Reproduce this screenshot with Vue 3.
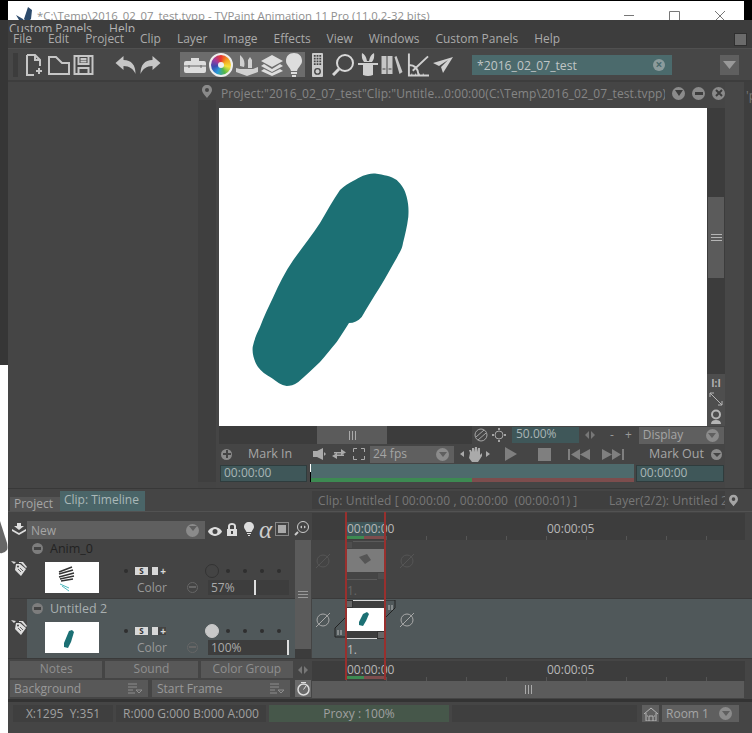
<template>
  <div class="screen">
    <div class="edge">
      <div class="edge-black"></div>
      <div class="edge-dark"></div>
      <div class="edge-white">
        <svg class="swoosh" width="8" height="33" viewBox="0 0 8 33"><path d="M0 0L7 22Q8 27 7 29Q4 33 0 32Z" fill="#666" /></svg>
      </div>
    </div>

    <div class="app">
      <div class="titlebar">
        <div class="title-white">
          <svg class="butterfly" width="18" height="16" viewBox="0 0 18 16"><path d="M0 8L7 12L10 16L6 16L3 13ZM8 12L12 0L16 3L15 12L11 16Z" fill="#2c4a6b" /></svg>
          <span class="title-text">*C:\Temp\2016_02_07_test.tvpp - TVPaint Animation 11 Pro (11.0.2-32 bits)</span>
          <span class="spacer"></span>
          <svg class="wincontrols" width="110" height="20" viewBox="0 0 110 20" fill="none" stroke="#777"><path d="M0 14.5H10M45.5 10.5H55.5V20.5H45.5ZM91 10L101 20M101 10L91 20" /></svg>
        </div>
        <div class="title-black"></div>
      </div>

      <div class="ghostmenu"><span>Custom Panels</span><span>Help</span></div>

      <div class="menubar">
        <span v-for="m in menus" :key="m">{{ m }}</span>
        <span class="spacer"></span>
        <span class="menu-box"></span>
      </div>

      <div class="toolbar">
        <span class="grip"></span>
        <svg class="ic" style="margin-left:8px" width="16" height="22" viewBox="0 0 16 22" fill="none" stroke="#c6c6c6" stroke-width="2"><path d="M1 1H9L14 6V12M1 1V21H8M9 1V6H14M10 17H16M13 14V20" /></svg>
        <svg class="ic" style="margin-left:6px" width="22" height="20" viewBox="0 0 22 20" fill="none" stroke="#c6c6c6" stroke-width="2"><path d="M1 19V2H8L14 8H21V19Z" /></svg>
        <svg class="ic" style="margin-left:3px" width="21" height="20" viewBox="0 0 20 20" fill="none" stroke="#c6c6c6" stroke-width="2"><path d="M1 1H19V19H1ZM5 1V9H15V1M5 19V13H15V19M7 4H13M7 6.500H13" /></svg>
        <svg class="ic" style="margin-left:21px" width="21" height="18" viewBox="0 0 20 18" fill="#c6c6c6"><path d="M0 7L8 0V4C16 4 20 9 20 18C18 13 14 10 8 10V14Z" /></svg>
        <svg class="ic" style="margin-left:4px" width="21" height="18" viewBox="0 0 20 18" fill="#c6c6c6"><path d="M20 7L12 0V4C4 4 0 9 0 18C2 13 6 10 12 10V14Z" /></svg>

        <div class="tool-group">
          <svg width="22" height="16" viewBox="0 0 22 16"><path d="M7 4V1H15V4H20Q22 4 22 6V14Q22 16 20 16H2Q0 16 0 14V6Q0 4 2 4Z" fill="#ddd" /><path d="M0 9H22M5 8V11M17 8V11" stroke="#666" /></svg>
          <span class="wheel"><span></span></span>
          <svg width="22" height="22" viewBox="0 0 22 22"><path d="M4 1Q10 6 8 13L4 12ZM14 3L16 6V14H12V6ZM0 14L4 15H17L22 13V18L11 22L0 18Z" fill="#d0d0d0" /></svg>
          <svg width="22" height="22" viewBox="0 0 22 22" fill="#ddd"><path d="M11 1L22 7L11 13L0 7ZM3 10L11 15L19 10L22 12L11 18L0 12ZM3 15L11 19L19 15L22 17L11 22L0 17Z" /></svg>
          <svg width="16" height="24" viewBox="0 0 16 24" fill="#ddd"><path d="M8 0C13 0 16 3 16 8C16 12 12 14 11 18H5C4 14 0 12 0 8C0 3 3 0 8 0ZM5 19H11V21H5ZM6 22H10V24H6Z" /></svg>
        </div>

        <svg class="ic" style="margin-left:7px" width="11" height="26" viewBox="0 0 12 26"><rect width="12" height="26" rx="1" fill="#ccc" /><path d="M2 3H10M2 6H10M2 9H10M2 12H10" stroke="#444" stroke-width="2" stroke-dasharray="2 1" /><circle cx="6" cy="20" r="3" fill="none" stroke="#444" stroke-width="1.500" /></svg>
        <svg class="ic" style="margin-left:9px" width="22" height="22" viewBox="0 0 22 22" fill="none" stroke="#d8d8d8" stroke-width="2"><circle cx="13" cy="9" r="8" /><path d="M7 15L1 21" stroke-width="3" /></svg>
        <svg class="ic" style="margin-left:4px" width="20" height="24" viewBox="0 0 20 24" fill="#d0d0d0"><path d="M4 0Q8 2 9 8H11Q12 2 16 0Q17 5 14 9H6Q3 5 4 0ZM0 10H20V12H15V22Q10 24 5 22V12H0Z" /></svg>
        <svg class="ic" style="margin-left:3px" width="22" height="18" viewBox="0 0 21 18" fill="#c6c6c6"><path d="M0 0H5V18H0ZM6 0H11V18H6ZM13 1L15 0L21 16L18 18Z" /><path d="M1 13H4M7 13H10" stroke="#444" /></svg>
        <svg class="ic" style="margin-left:4px" width="22" height="24" viewBox="0 0 23 24" fill="none" stroke="#d0d0d0" stroke-width="2"><path d="M2 0V23H23M2 12Q11 12 12 22M6 18L22 3" /><path d="M5 21V23M9 21V23M13 21V23M17 21V23" stroke-width="1" /></svg>
        <svg class="ic" style="margin-left:4px" width="20" height="16" viewBox="0 0 20 16" fill="#d0d0d0"><path d="M0 6L20 0L10 16L8 10L15 3L6 9Z" /></svg>

        <div class="doc-field"><span>*2016_02_07_test</span><span class="x-dot">×</span></div>
        <div class="doc-arrow"><svg width="13" height="8" viewBox="0 0 13 8"><path d="M0 0H13L6.500 8Z" fill="#999" /></svg></div>
      </div>

      <div class="main">
        <div class="left-panel"></div>
        <div class="pin-col">
          <div class="pin-top">
            <svg width="10" height="13" viewBox="0 0 10 13"><path fill-rule="evenodd" d="M5 0C8 0 10 2 10 5C10 8 7 10 5 13C3 10 0 8 0 5C0 2 2 0 5 0ZM5 3A2 2 0 1 0 5 7A2 2 0 1 0 5 3Z" fill="#8a8a8a" /></svg>
          </div>
          <div class="pin-body"></div>
        </div>

        <div class="view">
          <div class="view-title">
            <span class="view-title-text">Project:"2016_02_07_test"Clip:"Untitle...0:00:00(C:\Temp\2016_02_07_test.tvpp)</span>
            <span class="round-btn"><svg width="8" height="6" viewBox="0 0 8 6"><path d="M0 0H8L4 6Z" fill="#3d3d3d" /></svg></span>
            <span class="round-btn"><svg width="8" height="3" viewBox="0 0 8 3"><path d="M0 0H8V3H0Z" fill="#3d3d3d" /></svg></span>
            <span class="round-btn"><svg width="8" height="8" viewBox="0 0 8 8"><path d="M1 1L7 7M7 1L1 7" stroke="#3d3d3d" stroke-width="2" /></svg></span>
          </div>

          <div class="view-body">
            <svg class="canvas" width="488" height="318" viewBox="219 108 488 318">
              <rect x="219" y="108" width="488" height="318" fill="#fff" />
              <path fill="#1c7074" d="M375 173.500 C384 175 391 176 396.700 180 C402 185 405 190 406.700 197 C408.500 204 408.800 210 408.300 217 C407 227 405 235 403 243 C402 250 399 253 396.700 258 C391 268 386 277 380 287 C373 298 367 308 361.700 317 C358 321 354 323 349 323 C345 329 341 336 336.700 342 C331 349 326 355 320 362 C313 369 306 375 298.300 382 C294 385 290 386 286.700 386 C281 385 277 382 271.700 378 C266 375 261 371 258 367 C254 361 252 353 252.700 347 C254 340 257 333 260 327 C264 316 269 306 273.300 297 C279 284 285 272 293.300 260 C302 248 312 235 320 223 C327 211 333 200 340 190 C344 186 349 183 353 181 C360 177 367 173 375 173.500Z" />
            </svg>
            <div class="vscroll">
              <div class="vscroll-track"></div>
              <div class="vscroll-thumb"><i></i><i></i><i></i></div>
              <div class="vscroll-rest">
                <span class="one-one">I:I</span>
                <svg width="14" height="14" viewBox="0 0 14 14" fill="none" stroke="#b5b5b5"><path d="M1 1L13 13M1 5V1H5M13 9V13H9" /></svg>
                <svg width="12" height="15" viewBox="0 0 12 15"><circle cx="6" cy="5.500" r="4" fill="none" stroke="#b5b5b5" stroke-width="2" /><path d="M1 15Q1 11 6 11Q11 11 11 15Z" fill="#b5b5b5" /></svg>
              </div>
            </div>
          </div>

          <div class="view-row zoom-row">
            <div class="hscroll-rest hs-a"></div>
            <div class="hscroll"><i></i><i></i><i></i></div>
            <div class="hscroll-rest hs-b"></div>
            <svg class="zr" width="14" height="14" viewBox="0 0 14 14" fill="none" stroke="#a5a5a5"><circle cx="7" cy="7" r="6" /><path d="M2 9L10 2M4 12L12 5" /></svg>
            <svg class="zr zr2" width="14" height="14" viewBox="0 0 14 14" fill="none" stroke="#a5a5a5"><circle cx="7" cy="7" r="4" /><path d="M7 0V2M7 12V14M0 7H2M12 7H14" stroke-width="2" /></svg>
            <div class="zoom-field">50.00%</div>
            <span class="lr"><svg width="10" height="8" viewBox="0 0 10 8"><path d="M4 0V8L0 4ZM6 0L10 4L6 8Z" fill="#777" /></svg></span>
            <span class="pm pm-minus">-</span>
            <span class="pm pm-plus">+</span>
            <div class="dropdown display-dd"><span>Display</span><span class="dd-dot"><svg width="8" height="5" viewBox="0 0 8 5"><path d="M0 0H8L4 5Z" fill="#5f5f5f" /></svg></span></div>
          </div>

          <div class="view-row transport">
            <span class="plus-dot"><svg width="8" height="8" viewBox="0 0 8 8"><path d="M3 0H5V3H8V5H5V8H3V5H0V3H3Z" fill="#444" /></svg></span>
            <span class="mark-in">Mark In</span>
            <svg style="margin-left:22px" width="13" height="12" viewBox="0 0 13 12" fill="#aaa"><path d="M0 3H4L10 0V12L4 9H0ZM11 4L13 6L11 8Z" /></svg>
            <svg style="margin-left:6px" width="14" height="10" viewBox="0 0 14 10" fill="#aaa"><path d="M2 3H9V0L14 3.500L9 6V4.500H2ZM12 7H5V10L0 7L5 4V5.500H12Z" /></svg>
            <svg style="margin-left:7px" width="12" height="12" viewBox="0 0 12 12" fill="none" stroke="#aaa"><path d="M0.500 4V0.500H4M8 0.500H11.500V4M11.500 8V11.500H8M4 11.500H0.500V8" /></svg>
            <div class="dropdown fps-dd"><span>24 fps</span><span class="dd-dot"><svg width="8" height="5" viewBox="0 0 8 5"><path d="M0 0H8L4 5Z" fill="#5f5f5f" /></svg></span></div>
            <svg style="margin-left:6px" width="30" height="15" viewBox="0 0 30 15" fill="#aaa"><path d="M4 4V10L0 7ZM26 4V10L30 7ZM10 6L9 3H11L12 5V1H14V5L15 0H17V5L18 1H20V8L22 6V9L18 15H12L9 11Z" /></svg>
            <svg style="margin-left:15px" width="12" height="14" viewBox="0 0 12 14"><path d="M0 0L12 7L0 14Z" fill="#7f7f7f" /></svg>
            <span class="stop"></span>
            <svg style="margin-left:17px" width="22" height="11" viewBox="0 0 22 11" fill="#7f7f7f"><path d="M0 0H2V11H0ZM3 5.500L12 0V11ZM12 5.500L22 0V11Z" /></svg>
            <svg style="margin-left:12px" width="22" height="11" viewBox="0 0 22 11" fill="#7f7f7f"><path d="M22 0H20V11H22ZM19 5.500L10 0V11ZM10 5.500L0 0V11Z" /></svg>
            <span class="mark-out">Mark Out</span>
            <span class="plus-dot down-dot"><svg width="8" height="8" viewBox="0 0 8 8"><path d="M0 3L4 7L8 3Z" fill="#444" /></svg></span>
          </div>

          <div class="view-row range-row">
            <div class="time-field">00:00:00</div>
            <div class="range">
              <i class="range-cursor"></i>
              <div class="range-bottom"><i class="r-green"></i><i class="r-red"></i></div>
            </div>
            <div class="time-field time-right">00:00:00</div>
          </div>
        </div>

        <div class="strip"></div>
        <div class="other-panel"><span>'p</span></div>
      </div>

      <div class="tabs">
        <span class="tab-project">Project</span>
        <span class="tab-clip">Clip: Timeline</span>
        <div class="clip-info">
          <span>Clip: Untitled [ 00:00:00 , 00:00:00&nbsp; (00:00:01) ]</span>
          <span class="spacer"></span>
          <span class="layer-info">Layer(2/2): Untitled 2</span>
        </div>
        <svg class="info-pin" width="9" height="13" viewBox="0 0 10 13"><path fill-rule="evenodd" d="M5 0C8 0 10 2 10 5C10 8 7 10 5 13C3 10 0 8 0 5C0 2 2 0 5 0ZM5 3A2 2 0 1 0 5 7A2 2 0 1 0 5 3Z" fill="#a5a5a5" /></svg>
      </div>

      <div class="timeline">
        <i class="red-line red-a"></i>
        <i class="red-line red-b"></i>

        <div class="tl-head">
          <div class="tl-tools">
            <svg width="14" height="13" viewBox="0 0 14 13" fill="#ddd"><path d="M5 0H9V3H12L7 7L2 3H5ZM0 6L7 10L14 6V8L7 12L0 8Z" /></svg>
            <div class="new-dd"><span>New</span><span class="dd-dot"><svg width="8" height="5" viewBox="0 0 8 5"><path d="M0 0H8L4 5Z" fill="#5f5f5f" /></svg></span></div>
            <svg style="margin-left:3px" width="14" height="9" viewBox="0 0 14 9"><path fill-rule="evenodd" d="M7 0C11 0 14 4 14 4.500C14 5 11 9 7 9C3 9 0 5 0 4.500C0 4 3 0 7 0ZM7 2A2.500 2.500 0 1 0 7 7A2.500 2.500 0 1 0 7 2Z" fill="#ddd" /></svg>
            <svg style="margin-left:5px" width="10" height="13" viewBox="0 0 10 13"><path fill-rule="evenodd" d="M0 6H1V3C1 1 3 0 5 0C7 0 9 1 9 3V6H10V13H0ZM3 6H7V3C7 2 6 2 5 2C4 2 3 2 3 3ZM4 8V11H6V8Z" fill="#ddd" /></svg>
            <svg style="margin-left:7px" width="10" height="14" viewBox="0 0 10 14" fill="#ddd"><path d="M5 0C8 0 10 2 10 5C10 7 8 8 7.500 10H2.500C2 8 0 7 0 5C0 2 2 0 5 0ZM3 11H7V12H3ZM4 13H6V14H4Z" /></svg>
            <span class="alpha">α</span>
            <svg style="margin-left:3px" width="14" height="14" viewBox="0 0 14 14"><rect x="0.500" y="0.500" width="13" height="13" fill="none" stroke="#ccc" stroke-dasharray="1 1" /><rect x="3" y="3" width="8" height="8" fill="#aaa" /></svg>
            <svg style="margin-left:5px" width="15" height="15" viewBox="0 0 15 15" fill="none" stroke="#ccc"><circle cx="9" cy="6" r="5.500" /><path d="M4 11L1 14" stroke-width="2" /><path d="M6 6L8 4.500V7.500ZM12 6L10 4.500V7.500Z" fill="#ccc" stroke="none" /></svg>
          </div>
          <div class="ruler ruler-top">
            <span class="ruler-mark"></span>
            <span class="ruler-t ruler-t0">00:00:00</span>
            <span class="ruler-t ruler-t5">00:00:05</span>
            <div class="ruler-prog"><i class="r-green"></i><i class="r-red"></i></div>
          </div>
        </div>

        <div class="tl-rows">
          <div class="layers">
            <div v-for="l in layers" :key="l.name" class="layer" :class="{ 'layer-active': l.active }">
              <div class="gutter">
                <svg width="16" height="16" viewBox="0 0 16 16"><path d="M0 1L5 2L3 4ZM5 4H9L15 9L10 16L4 10Z" fill="#ddd" /><path d="M8 2H12L16 7L15 8L10 3H8Z" fill="#ddd" /><circle cx="7" cy="6.500" r="1" fill="#444" /><path d="M7 9L10 12M9 8L12 11" stroke="#444" stroke-width="0.800" /></svg>
              </div>
              <div class="layer-body">
                <div class="layer-name">
                  <span class="minus"></span>
                  <span>{{ l.name }}</span>
                </div>
                <div class="layer-main">
                  <svg v-if="l.active" class="thumb" width="54" height="31" viewBox="0 0 54 31">
                    <rect width="54" height="31" fill="#fff" />
                    <path d="M24 9L27 8L29 10L26 20L23 26L19 25L19 21Z" fill="#1c7074" />
                  </svg>
                  <svg v-else class="thumb" width="54" height="31" viewBox="0 0 54 31">
                    <rect width="54" height="31" fill="#fff" />
                    <path d="M14 10L27 5M14 12L28 8M14 15L29 11M15 17L29 14M16 19L28 17" stroke="#333" stroke-width="1.500" />
                    <path d="M15 22L24 26M17 24L24 29" stroke="#4fb8bd" />
                  </svg>
                  <div class="layer-ctrl">
                    <div class="ctrl-top">
                      <i class="dot"></i>
                      <span class="s-btn">S</span>
                      <span class="p-btn"><i></i>+</span>
                      <i class="big-dot" :class="{ filled: l.active }"></i>
                      <i class="dot d1"></i><i class="dot d2"></i><i class="dot d2"></i><i class="dot d2"></i>
                    </div>
                    <div class="ctrl-bottom">
                      <span class="ctrl-color">Color</span>
                      <span class="ctrl-minus"></span>
                      <div class="opacity">
                        <span>{{ l.opacity }}</span>
                        <i :style="{ left: l.handle + 'px' }"></i>
                      </div>
                    </div>
                  </div>
                </div>
              </div>
            </div>
          </div>

          <div class="layer-scroll">
            <div class="layer-thumb"><i></i><i></i><i></i></div>
            <div class="layer-scroll-rest"></div>
          </div>

          <div class="frames">
            <div class="frame-row frame-row-off">
              <svg class="nope" width="16" height="16" viewBox="0 0 16 16" fill="none" stroke="#555"><circle cx="8" cy="8" r="6" /><path d="M1 15L15 1" /></svg>
              <div class="frame-col">
                <div class="frame frame-off">
                  <i class="corner corner-tl"></i>
                  <i class="corner corner-br"></i>
                  <div class="frame-bar"></div>
                  <svg class="frame-img" width="38" height="23" viewBox="0 0 38 23">
                    <rect width="38" height="23" fill="#7b7b7b" />
                    <path d="M13 8L21 5L25 11L19 15Z" fill="#555" />
                  </svg>
                  <div class="frame-bar"></div>
                </div>
                <span class="frame-no off">1.</span>
              </div>
              <svg class="nope" style="margin-left:15px" width="16" height="16" viewBox="0 0 16 16" fill="none" stroke="#555"><circle cx="8" cy="8" r="6" /><path d="M1 15L15 1" /></svg>
            </div>
            <div class="frame-row frame-row-on">
              <svg class="nope" width="16" height="16" viewBox="0 0 16 16" fill="none" stroke="#a8a8a8"><circle cx="8" cy="8" r="6" /><path d="M1 15L15 1" /></svg>
              <div class="frame-col">
                <div class="frame">
                  <svg class="grab grab-r" width="12" height="20" viewBox="0 0 12 20" fill="none" stroke="#222"><path d="M0 0H11V8L0 19" /><path d="M5 5V10M8 5V10" stroke="#bbb" /></svg>
                  <svg class="grab grab-l" width="12" height="20" viewBox="0 0 12 20" fill="none" stroke="#222"><path d="M11 0L1 10V19H11" /><path d="M4 12V17M7 12V17" stroke="#bbb" /></svg>
                  <i class="corner corner-tl"></i>
                  <i class="corner corner-br"></i>
                  <div class="frame-bar"></div>
                  <svg class="frame-img" width="38" height="23" viewBox="0 0 38 23">
                    <rect width="38" height="23" fill="#fff" />
                    <path d="M17 6L21 4L23 6L20 13L17 18L13 17L13 14Z" fill="#1c7074" />
                  </svg>
                  <div class="frame-bar"></div>
                </div>
                <span class="frame-no">1.</span>
              </div>
              <svg class="nope" style="margin-left:15px" width="16" height="16" viewBox="0 0 16 16" fill="none" stroke="#a8a8a8"><circle cx="8" cy="8" r="6" /><path d="M1 15L15 1" /></svg>
            </div>
          </div>
        </div>

        <div class="tl-buttons">
          <div class="note-btns">
            <span>Notes</span><span>Sound</span><span>Color Group</span>
          </div>
          <div class="mini-lr"><svg width="10" height="8" viewBox="0 0 10 8"><path d="M4 0V8L0 4ZM6 0L10 4L6 8Z" fill="#777" /></svg></div>
          <div class="ruler ruler-bottom">
            <span class="ruler-t ruler-t0">00:00:00</span>
            <span class="ruler-t ruler-t5">00:00:05</span>
            <div class="ruler-prog"><i class="r-green"></i><i class="r-red"></i></div>
          </div>
        </div>

        <div class="tl-bottom">
          <div class="list-dd">
            <span>Background</span>
            <svg width="14" height="12" viewBox="0 0 14 12" fill="none" stroke="#8d8d8d"><path d="M0 1H9M0 4H9M0 7H5M0 10H7M8 7H14L11 10Z" /></svg>
          </div>
          <div class="list-dd list-dd2">
            <span>Start Frame</span>
            <svg width="14" height="12" viewBox="0 0 14 12" fill="none" stroke="#8d8d8d"><path d="M0 1H9M0 4H9M0 7H5M0 10H7M8 7H14L11 10Z" /></svg>
          </div>
          <div class="stopwatch">
            <svg width="13" height="15" viewBox="0 0 13 15" fill="none" stroke="#ddd"><circle cx="6.500" cy="8.500" r="5.500" stroke-width="1.500" /><path d="M6.500 8.500L9 5M4 1.500H9" /></svg>
          </div>
          <div class="tl-hscroll"><i></i><i></i><i></i></div>
        </div>
      </div>

      <div class="sep"></div>

      <div class="status">
        <span class="st st-xy">X:1295&nbsp; Y:351</span>
        <span class="st st-rgb">R:000 G:000 B:000 A:000</span>
        <span class="st st-proxy">Proxy : 100%</span>
        <span class="st st-empty"></span>
        <span class="house">
          <svg width="14" height="14" viewBox="0 0 14 14" fill="none" stroke="#b5b5b5"><path d="M0 7L7 1L14 7M2 6V14H12V6M5 14V9H9V14M3 9H4M10 9H11" /></svg>
        </span>
        <div class="room"><span>Room 1</span><span class="dd-dot"><svg width="8" height="5" viewBox="0 0 8 5"><path d="M0 0H8L4 5Z" fill="#5f5f5f" /></svg></span></div>
      </div>
    </div>
  </div>
</template>

<script setup>
const menus = ['File', 'Edit', 'Project', 'Clip', 'Layer', 'Image', 'Effects', 'View', 'Windows', 'Custom Panels', 'Help']

const layers = [
  { name: 'Anim_0', opacity: '57%', handle: 46, active: false },
  { name: 'Untitled 2', opacity: '100%', handle: 79, active: true }
]
</script>

<style scoped>
.screen {
  width: 752px;
  height: 733px;
  display: flex;
  overflow: hidden;
  font-family: "Open Sans", "Liberation Sans", sans-serif;
  font-size: 12px;
  color: #a8a8a8;
  background: #444;
}

.spacer { flex: 1; }

/* what's left of the desktop on the left side */
.edge { width: 8px; display: flex; flex-direction: column; flex-shrink: 0; }
.edge-black { height: 20px; background: #000; }
.edge-dark { height: 345px; background: #363636; }
.edge-white { flex: 1; background: #fff; padding-top: 156px; }
.swoosh { display: block; }

.app { width: 744px; display: flex; flex-direction: column; }

.titlebar { height: 20px; display: flex; overflow: hidden; background: #000; padding-top: 1px; box-sizing: border-box; }
.title-white { width: 736px; background: #fff; display: flex; align-items: flex-start; overflow: hidden; }
.title-black { flex: 1; background: #000; }
.butterfly { margin: 6px 0 0 8px; }
.title-text { margin: 6px 0 0 3px; color: #8f8f8f; font-size: 11.35px; line-height: 18px; white-space: nowrap; }
.wincontrols { margin: 0 10px 0 0; flex-shrink: 0; }

.ghostmenu { height: 12px; background: #3d3d3d; overflow: hidden; display: flex; gap: 17px; padding-left: 1px; font-size: 12px; line-height: 18px; color: #b5b5b5; }
.menubar { height: 16px; background: #3d3d3d; display: flex; gap: 16px; padding-left: 5px; line-height: 13px; font-size: 11.95px; color: #aaa; white-space: nowrap; }
.menu-box { width: 11px; height: 11px; background: #6b6b6b; border: 1px solid #2f2f2f; margin: 1px 5px 0 0; }

.toolbar { height: 34px; background: #474747; display: flex; align-items: center; padding-left: 5px; box-sizing: border-box; border-top: 1px solid #505050; border-bottom: 2px solid #3d3d3d; }
.grip { width: 5px; height: 24px; background: #3c3c3c; }
.ic { flex-shrink: 0; }
.tool-group { margin-left: 19px; width: 125px; height: 25px; background: #6c6c6c; display: flex; align-items: center; justify-content: space-around; padding: 0 2px; box-sizing: border-box; flex-shrink: 0; }
.wheel { width: 20px; height: 20px; border-radius: 50%; border: 2px solid #eee; display: flex; align-items: center; justify-content: center; background: conic-gradient(#e8362e, #f2a21f, #f3e23a, #53b848, #2a9bd8, #3a4bb0, #a13a9c, #e8362e); }
.wheel span { width: 6px; height: 6px; border-radius: 50%; background: #eee; }

.doc-field { margin-left: 19px; width: 200px; height: 20px; background: #4b6a6c; color: #c0c6c6; display: flex; align-items: center; justify-content: space-between; padding: 0 7px 0 5px; box-sizing: border-box; font-size: 12.2px; line-height: 18px; flex-shrink: 0; }
.doc-field > span:first-child { padding-top: 2px; }
.x-dot { width: 12px; height: 12px; border-radius: 50%; background: #8c9b9c; color: #4b6a6c; font-size: 12px; line-height: 11px; text-align: center; font-weight: 700; }
.doc-arrow { margin-left: 48px; width: 19px; height: 20px; background: #5f5f5f; display: flex; align-items: center; justify-content: center; flex-shrink: 0; }

.main { height: 406px; display: flex; }
.left-panel { width: 190px; background: #454545; }
.pin-col { width: 18px; display: flex; flex-direction: column; }
.pin-top { height: 18px; background: #454545; display: flex; align-items: center; justify-content: center; }
.pin-body { flex: 1; background: #3f3f3f; margin-bottom: 6px; }

.view { width: 509px; background: #454545; display: flex; flex-direction: column; }
.view-title { height: 26px; display: flex; align-items: center; padding-left: 5px; box-sizing: border-box; padding-bottom: 4px; }
.view-title-text { width: 444px; overflow: hidden; white-space: nowrap; color: #858585; font-size: 12px; letter-spacing: 0.09px; }
.round-btn { width: 13px; height: 13px; border-radius: 50%; background: #8b8b8b; margin-left: 7px; display: flex; align-items: center; justify-content: center; flex-shrink: 0; }

.view-body { height: 318px; display: flex; padding-left: 3px; }
.canvas { display: block; }
.vscroll { width: 18px; display: flex; flex-direction: column; background: #3c3c3c; }
.vscroll-track { height: 89px; }
.vscroll-thumb { height: 81px; margin: 0 1px; background: #5b5b5b; display: flex; flex-direction: column; align-items: center; justify-content: center; gap: 2px; }
.vscroll-thumb i { width: 11px; height: 1px; background: #b5b5b5; }
.vscroll-rest { flex: 1; display: flex; flex-direction: column; justify-content: flex-end; align-items: center; gap: 3px; background: #4e4e4e; margin-top: 96px; padding-bottom: 2px; }
.one-one { font-size: 10px; line-height: 11px; color: #b5b5b5; font-weight: 700; }

.view-row { display: flex; align-items: center; }
.zoom-row { height: 18px; }
.hs-a { width: 98px; margin-left: 3px; }
.hscroll { width: 70px; height: 18px; background: #5b5b5b; display: flex; gap: 2px; justify-content: center; align-items: center; flex-shrink: 0; }
.hscroll i { width: 1px; height: 9px; background: #aaa; }
.hscroll-rest { height: 18px; background: #3c3c3c; flex-shrink: 0; }
.hs-b { width: 85px; }
.zr { flex-shrink: 0; margin-left: 2px; }
.zr2 { margin-left: 4px; }
.zoom-field { margin-left: 6px; width: 67px; height: 16px; background: #3f5759; color: #aab5b5; font-size: 12px; line-height: 14px; padding-left: 4px; box-sizing: border-box; flex-shrink: 0; }
.lr { margin-left: 6px; display: flex; }
.pm { color: #999; font-size: 12px; padding-bottom: 2px; }
.pm-minus { margin-left: 15px; }
.pm-plus { margin-left: 11px; }
.dropdown { background: #5f5f5f; display: flex; align-items: center; justify-content: space-between; box-sizing: border-box; color: #a5a5a5; flex-shrink: 0; }
.dropdown > span:first-child { padding-bottom: 2px; }
.display-dd { margin-left: 7px; width: 85px; height: 17px; padding: 0 5px 0 4px; }
.dd-dot { width: 13px; height: 13px; border-radius: 50%; background: #8b8b8b; display: flex; align-items: center; justify-content: center; flex-shrink: 0; }

.transport { height: 20px; }
.plus-dot { width: 11px; height: 11px; border-radius: 50%; background: #8b8b8b; display: flex; align-items: center; justify-content: center; margin-left: 5px; flex-shrink: 0; }
.mark-in { margin-left: 16px; width: 43px; white-space: nowrap; color: #a5a5a5; font-size: 12.5px; padding-bottom: 2px; }
.fps-dd { margin-left: 5px; width: 84px; height: 17px; padding: 0 5px 0 3px; }
.stop { width: 13px; height: 13px; background: #7f7f7f; margin-left: 21px; flex-shrink: 0; }
.mark-out { margin-left: 25px; width: 54px; white-space: nowrap; color: #a5a5a5; font-size: 12.5px; padding-bottom: 2px; flex-shrink: 0; }
.down-dot { margin-left: 8px; }

.range-row { height: 18px; padding-left: 4px; }
.time-field { width: 87px; height: 17px; background: #3f5759; color: #a8b5b5; line-height: 14px; padding-left: 3px; box-sizing: border-box; border: 1px solid #2f3c3d; flex-shrink: 0; }
.time-right { width: 88px; margin-left: 2px; }
.range { margin-left: 3px; width: 324px; height: 18px; background: #4e6a6c; position: relative; display: flex; flex-direction: column; justify-content: flex-end; flex-shrink: 0; }
.range-cursor { position: absolute; left: 0; top: 0; bottom: 0; width: 1px; background: #000; border-top: 8px solid #fff; box-sizing: border-box; }
.range-bottom { height: 4px; display: flex; }
.r-green { background: #3d8a52; display: block; width: 162px; }
.r-red { background: #7d4d4d; display: block; flex: 1; }

.strip { width: 19px; background: #474747; }
.other-panel { width: 8px; background: #3e3e3e; color: #777; padding: 8px 0 0 2px; box-sizing: border-box; line-height: 12px; overflow: hidden; }

.tabs { height: 24px; display: flex; align-items: flex-end; position: relative; background: #454545; border-top: 1px solid #383838; box-sizing: border-box; border-bottom: 1px solid #525252; padding-left: 2px; }
.tab-project { width: 50px; height: 14px; background: #555; color: #a5a5a5; padding-left: 4px; box-sizing: border-box; line-height: 14px; }
.tab-clip { width: 85px; height: 20px; background: #4a6568; color: #aab8b8; padding-left: 4px; box-sizing: border-box; line-height: 18px; }
.clip-info { position: absolute; left: 304px; top: 2px; width: 413px; height: 18px; background: #3f3f3f; display: flex; align-items: center; padding-left: 6px; box-sizing: border-box; color: #777; letter-spacing: 0.1px; white-space: nowrap; }
.layer-info { margin-right: 0; overflow: hidden; width: 116px; }
.info-pin { position: absolute; left: 721px; top: 5px; }

.timeline { position: relative; height: 187px; display: flex; flex-direction: column; }
.red-line { position: absolute; top: 0; width: 2px; height: 168px; background: #98302e; z-index: 2; }
.red-a { left: 337px; }
.red-b { left: 376px; }

.tl-head { height: 28px; display: flex; }
.tl-tools { width: 304px; display: flex; align-items: flex-end; padding: 0 0 1px 4px; box-sizing: border-box; height: 28px; flex-shrink: 0; }
.tl-tools svg { flex-shrink: 0; margin-bottom: 3px; }
.new-dd { margin-left: 1px; width: 178px; height: 18px; background: #5f5f5f; color: #a5a5a5; display: flex; align-items: center; justify-content: space-between; padding: 0 6px 0 4px; box-sizing: border-box; flex-shrink: 0; }
.alpha { margin-left: 5px; color: #ccc; font-family: "Liberation Serif", serif; font-style: italic; font-size: 25px; line-height: 18px; }

.ruler { width: 433px; position: relative; background: #3d3d3d; color: #b8b8b8; flex-shrink: 0; background-image: repeating-linear-gradient(90deg, #555 0 1px, transparent 1px 40px); background-size: 100% 4px; background-position: 34px 100%; background-repeat: no-repeat; }
.ruler-top { height: 27px; margin-top: 1px; }
.ruler-mark { position: absolute; left: 35px; top: 9px; width: 38px; height: 14px; background: #3f5759; }
.ruler-t { position: absolute; top: 9px; line-height: 14px; }
.ruler-t0 { left: 35px; }
.ruler-t5 { left: 235px; }
.ruler-prog { position: absolute; left: 34px; bottom: 1px; width: 39px; height: 3px; display: flex; }
.ruler-prog .r-green { width: 18px; }

.tl-rows { height: 118px; display: flex; }
.layers { width: 285px; margin-left: 2px; display: flex; flex-direction: column; flex-shrink: 0; }
.layer { height: 58px; display: flex; }
.layer-active { height: 60px; border-top: 1px solid #3a3a3a; box-sizing: border-box; }
.gutter { width: 17px; background: #444; display: flex; justify-content: center; padding-top: 20px; box-sizing: border-box; flex-shrink: 0; }
.layer-body { flex: 1; display: flex; flex-direction: column; background: #444; }
.layer-active .layer-body { background: #50585a; }
.layer-name { height: 22px; display: flex; align-items: flex-start; color: #222; font-size: 12.5px; line-height: 12px; padding: 3px 0 0 5px; box-sizing: border-box; }
.layer-active .layer-name { height: 23px; padding-top: 4px; color: #a9b0b0; }
.minus { width: 11px; height: 11px; border-radius: 50%; background: #7d7d7d; margin-right: 7px; position: relative; flex-shrink: 0; }
.minus::after { content: ""; position: absolute; left: 2px; right: 2px; top: 4px; height: 3px; background: #444; }
.layer-main { display: flex; padding-left: 18px; }
.thumb { display: block; flex-shrink: 0; }
.layer-ctrl { display: flex; flex-direction: column; }
.ctrl-top { height: 18px; display: flex; align-items: center; }
.dot { width: 4px; height: 4px; border-radius: 50%; background: #2f2f2f; flex-shrink: 0; }
.ctrl-top > .dot:first-child { margin-left: 25px; }
.s-btn { margin-left: 7px; width: 13px; height: 8px; background: #d8d8d8; color: #333; font-size: 8px; line-height: 8px; font-weight: 700; text-align: center; }
.p-btn { margin-left: 4px; width: 14px; height: 8px; background: #444; color: #d8d8d8; font-size: 10px; line-height: 8px; font-weight: 700; display: flex; justify-content: space-between; }
.p-btn i { width: 6px; background: #d8d8d8; }
.big-dot { margin-left: 39px; width: 14px; height: 14px; border-radius: 50%; border: 1px solid #333; box-sizing: border-box; flex-shrink: 0; }
.big-dot.filled { background: #c8c8c8; border-color: #c8c8c8; }
.d1 { margin-left: 7px; }
.d2 { margin-left: 13px; }
.ctrl-bottom { display: flex; align-items: center; height: 15px; margin-top: 0; padding-left: 38px; }
.ctrl-color { width: 50px; color: #999; }
.ctrl-minus { width: 11px; height: 11px; border-radius: 50%; border: 1px solid #666; box-sizing: border-box; position: relative; }
.ctrl-minus::after { content: ""; position: absolute; left: 1px; right: 1px; top: 3px; height: 2px; background: #666; }
.opacity { margin-left: 10px; width: 81px; height: 15px; background: #3d3d3d; position: relative; padding-left: 3px; box-sizing: border-box; line-height: 15px; color: #aaa; }
.opacity i { position: absolute; top: 0; width: 2px; height: 15px; background: #ddd; }

.layer-scroll { width: 16px; display: flex; flex-direction: column; flex-shrink: 0; }
.layer-thumb { height: 109px; background: #5b5b5b; display: flex; flex-direction: column; justify-content: center; align-items: center; gap: 2px; }
.layer-thumb i { width: 10px; height: 1px; background: #999; }
.layer-scroll-rest { flex: 1; background: #3c3c3c; }

.frames { flex: 1; display: flex; flex-direction: column; margin-left: 1px; }
.frame-row { display: flex; align-items: flex-start; padding-left: 3px; box-sizing: border-box; }
.frame-row-off { height: 58px; background: #444; }
.frame-row-on { height: 60px; background: #50585a; border-top: 1px solid #3a3a3a; }
.nope { margin-top: 13px; flex-shrink: 0; }
.frame-col { margin-left: 15px; width: 38px; display: flex; flex-direction: column; }
.frame { position: relative; margin-top: 2px; outline: 1px solid #d8d8d8; }
.frame-off { outline: 1px solid #5a5a5a; }
.frame-bar { height: 7px; background: #3e3e3e; }
.frame-off .frame-bar { background: #454545; }
.frame-img { display: block; }
.frame-no { margin-top: 5px; color: #bcbcbc; line-height: 14px; padding-left: 1px; }
.frame-no.off { color: #666; }
.grab { position: absolute; }
.grab-r { left: 38px; top: -1px; }
.grab-l { right: 38px; top: 17px; }
.corner { position: absolute; width: 6px; height: 6px; background: #666; border: 1px solid #333; z-index: 1; }
.frame-off .corner { background: #4e4e4e; border-color: #444; }
.corner-tl { left: -1px; top: -1px; }
.corner-br { right: -1px; bottom: -1px; }

.tl-buttons { height: 22px; display: flex; align-items: flex-start; padding-top: 2px; box-sizing: border-box; background: #454545; border-top: 1px solid #3a3a3a; }
.note-btns { width: 283px; margin-left: 2px; display: flex; gap: 3px; flex-shrink: 0; }
.note-btns span { flex: 1; height: 17px; background: #585858; color: #8f8f8f; text-align: center; line-height: 16px; }
.mini-lr { width: 19px; height: 18px; display: flex; align-items: center; justify-content: center; flex-shrink: 0; }
.ruler-bottom { height: 20px; margin-left: 0; }
.ruler-bottom .ruler-t { top: 2px; }
.ruler-bottom .ruler-prog { bottom: 2px; }

.tl-bottom { height: 19px; display: flex; align-items: flex-start; background: #454545; }
.list-dd { width: 138px; height: 17px; margin-left: 2px; background: #585858; display: flex; align-items: center; justify-content: space-between; padding: 0 6px 0 4px; box-sizing: border-box; color: #999; flex-shrink: 0; }
.list-dd2 { margin-left: 4px; padding-left: 5px; }
.stopwatch { margin-left: 5px; width: 16px; height: 17px; background: #6a6a6a; display: flex; align-items: center; justify-content: center; flex-shrink: 0; }
.tl-hscroll { margin-left: 1px; width: 432px; height: 18px; background: #5b5b5b; display: flex; align-items: center; justify-content: center; gap: 2px; flex-shrink: 0; }
.tl-hscroll i { width: 1px; height: 9px; background: #aaa; }

.sep { height: 3px; background: #333; }

.status { height: 31px; display: flex; padding: 3px 0 0 5px; box-sizing: border-box; background: #454545; }
.st { height: 17px; line-height: 17px; background: #3f3f3f; color: #a0a0a0; text-align: center; margin-right: 3px; font-size: 12px; white-space: nowrap; box-sizing: border-box; flex-shrink: 0; }
.st-xy { width: 100px; }
.st-rgb { width: 150px; }
.st-proxy { width: 180px; background: #46574a; }
.st-empty { width: 185px; }
.house { width: 17px; height: 17px; margin-left: 2px; background: #5f5f5f; display: flex; align-items: center; justify-content: center; }
.room { margin-left: 3px; width: 77px; height: 17px; background: #5f5f5f; display: flex; align-items: center; justify-content: space-between; padding: 0 7px 0 4px; box-sizing: border-box; color: #a5a5a5; }
</style>
